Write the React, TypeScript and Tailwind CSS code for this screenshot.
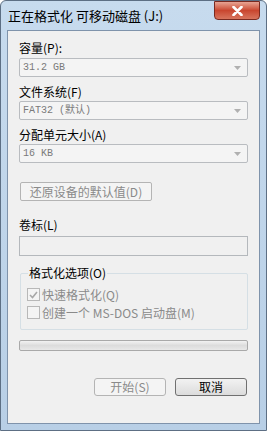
import React from "react";

const F = { fontFamily: '"Noto Sans CJK SC", "Noto Sans", sans-serif' };

function Combo({ text }: { text: string }) {
  return (
    <div className="flex h-[19px] items-center justify-between rounded-[2px] border border-[#b9bcc0] bg-[#f4f4f4] pl-[3px] pr-[6px] text-[11px] leading-none text-[#7a7a7a]">
      <span style={{ fontFamily: '"Liberation Mono", "Noto Sans CJK SC", monospace', fontSize: 10 }}>{text}</span>
      <svg width="7" height="4" viewBox="0 0 7 4">
        <path d="M0 0 L7 0 L3.5 4 Z" fill="#b0b0b0" />
      </svg>
    </div>
  );
}

export default function App() {
  return (
    <div
      className="relative h-[431px] w-[267px] overflow-hidden rounded-t-[6px] border border-[#5d6f84] bg-gradient-to-b from-[#c7dbee] to-[#b8cfe6]"
      style={F}
    >
      {/* title bar */}
      <div className="flex h-[29px] items-center justify-between pl-[7px]">
        <span className="text-[13px] leading-none text-black">正在格式化 可移动磁盘 (J:)</span>
        <div className="mr-[6px] -mt-[10px] flex h-[19px] w-[46px] items-center justify-center rounded-b-[4px] border border-[#7a2a20] bg-gradient-to-b from-[#e7a493] via-[#c9462f] to-[#d7745d]">
          <svg width="11" height="10" viewBox="0 0 11 10">
            <path d="M1.5 1 L9.5 9 M9.5 1 L1.5 9" stroke="#ffffff" strokeWidth="2.6" strokeLinecap="round" />
          </svg>
        </div>
      </div>
      {/* client */}
      <div className="mx-[6px] flex h-[394px] flex-col border border-[#7f93ab] bg-[#f0f0f0] pl-[11px] pr-[11px] text-[12px] leading-none text-black">
        <div className="mt-[11px] h-[12px]">容量(P):</div>
        <div className="mt-[4px]">
          <Combo text="31.2 GB" />
        </div>
        <div className="mt-[9px] h-[12px]">文件系统(F)</div>
        <div className="mt-[3px]">
          <Combo text="FAT32 (默认)" />
        </div>
        <div className="mt-[9px] h-[12px]">分配单元大小(A)</div>
        <div className="mt-[3px]">
          <Combo text="16 KB" />
        </div>
        <div className="mt-[19px] flex">
          <div className="ml-[1px] flex h-[19px] w-[132px] items-center justify-center rounded-[2px] border border-[#b4b4b4] bg-[#f4f4f4] text-[12px] text-[#8a8a8a]">
            还原设备的默认值(D)
          </div>
        </div>
        <div className="mt-[18px] h-[12px]">卷标(L)</div>
        <div className="mt-[5px] h-[20px] border border-[#b4b8bc] bg-[#f0f0f0]" />
        <div className="relative mt-[17px] ml-[1px] h-[57px] rounded-[2px] border border-[#d5dfe5]">
          <span className="absolute -top-[7px] left-[7px] bg-[#f0f0f0] px-[1px] text-[12px]">格式化选项(O)</span>
          <div className="mt-[14px] ml-[6px] flex items-center gap-[2px] text-[#8a8a8a]">
            <div className="flex h-[13px] w-[13px] items-center justify-center border border-[#b8b8b8] bg-[#f4f4f4]">
              <svg width="9" height="8" viewBox="0 0 9 8">
                <path d="M1 4 L3.5 6.5 L8 1" stroke="#a8a8a8" strokeWidth="1.6" fill="none" />
              </svg>
            </div>
            <span>快速格式化(Q)</span>
          </div>
          <div className="mt-[5px] ml-[6px] flex items-center gap-[2px] text-[#8a8a8a]">
            <div className="h-[13px] w-[13px] border border-[#b8b8b8] bg-[#f4f4f4]" />
            <span>创建一个 MS-DOS 启动盘(M)</span>
          </div>
        </div>
        <div className="mt-[10px] h-[11px] rounded-[2px] border border-[#a9a9a9] bg-gradient-to-b from-[#f2f2f2] via-[#dcdcdc] to-[#e8e8e8]" />
        <div className="mt-[27px] flex justify-end gap-[9px] pr-[1px]">
          <div className="flex h-[18px] w-[72px] items-center justify-center rounded-[3px] border border-[#b4b4b4] bg-[#f4f4f4] text-[#8a8a8a]">
            开始(S)
          </div>
          <div className="flex h-[18px] w-[72px] items-center justify-center rounded-[3px] border border-[#707070] bg-gradient-to-b from-[#f2f2f2] to-[#dcdcdc] text-black">
            取消
          </div>
        </div>
      </div>
    </div>
  );
}
